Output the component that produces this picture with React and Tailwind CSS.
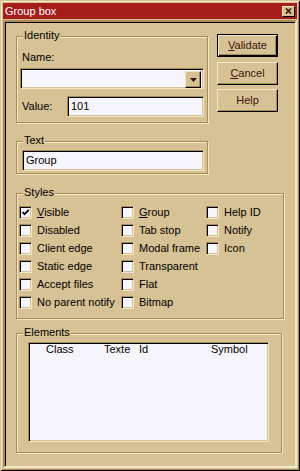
const sunken =
  "border border-t-[#a88c54] border-l-[#a88c54] border-r-[#f4e7c6] border-b-[#f4e7c6] shadow-[inset_1px_1px_0_#000,inset_-1px_-1px_0_#d6c294] bg-[#f6f5fb]";

function Group({ label, className, children }) {
  return (
    <div
      className={
        "relative border border-[#a88c54] shadow-[inset_1px_1px_0_#f4e7c6,1px_1px_0_#f4e7c6] " +
        className
      }
    >
      <span className="absolute -top-[8px] left-[6px] bg-[#d6c294] px-[1px] leading-[13px]">
        {label}
      </span>
      {children}
    </div>
  );
}

function Button({ children, primary }) {
  const cls = primary
    ? "border border-black shadow-[inset_1px_1px_0_#f4e7c6,inset_-1px_-1px_0_#000,inset_-2px_-2px_0_#a88c54]"
    : "border border-t-[#f4e7c6] border-l-[#f4e7c6] border-r-black border-b-black shadow-[inset_-1px_-1px_0_#a88c54]";
  return (
    <div
      className={
        "w-[61px] h-[23px] flex items-center justify-center text-[#3c160c] leading-[13px] " + cls
      }
    >
      {children}
    </div>
  );
}

function Check({ checked, children }) {
  return (
    <div className="flex items-center h-[13px] gap-[5px]">
      <span className={"w-[13px] h-[13px] shrink-0 flex items-center justify-center " + sunken}>
        {checked && (
          <svg width="9" height="9" viewBox="0 0 9 9">
            <path d="M1.5 4 L3.5 6.2 L7.8 1.8" fill="none" stroke="#000" strokeWidth="1.8" />
          </svg>
        )}
      </span>
      <span className="leading-[13px] whitespace-nowrap">{children}</span>
    </div>
  );
}

export default function App() {
  return (
    <div
      className="w-[300px] h-[471px] p-[3px] bg-[#d6c294] text-black text-[11px] shadow-[inset_1px_1px_0_#d6c294,inset_-1px_-1px_0_#000,inset_2px_2px_0_#f4e7c6,inset_-2px_-2px_0_#a88c54]"
      style={{ fontFamily: '"Liberation Sans", Arial, sans-serif' }}
    >
      {/* Title bar */}
      <div className="h-[16px] bg-[#a61e1c] flex items-center pl-[2px] pr-[2px]">
        <span className="text-white text-[11px] leading-[13px]">Group box</span>
        <div className="ml-auto w-[13px] h-[11px] bg-[#d6c294] border border-t-[#f4e7c6] border-l-[#f4e7c6] border-r-black border-b-black flex items-center justify-center">
          <svg width="7" height="6" viewBox="0 0 7 6">
            <path d="M1 0.5 L6 5.5 M6 0.5 L1 5.5" stroke="#3c160c" strokeWidth="1.6" />
          </svg>
        </div>
      </div>

      {/* Client area */}
      <div className="mt-[1px] w-[294px] h-[448px] border-2 border-t-[#a88c54] border-l-[#a88c54] border-r-[#f4e7c6] border-b-[#f4e7c6] shadow-[inset_1px_1px_0_#000]">
        <div className="flex">
          <div className="ml-[11px] mt-[14px] w-[192px]">
            <Group label="Identity" className="h-[87px] px-[3px] pt-[14px]">
              <div className="pl-[2px] leading-[13px]">Name:</div>
              <div className={"mt-[4px] h-[21px] flex justify-end p-[2px] " + sunken}>
                <div className="w-[16px] h-[17px] bg-[#d6c294] border border-t-[#f4e7c6] border-l-[#f4e7c6] border-r-black border-b-black shadow-[inset_-1px_-1px_0_#a88c54] flex items-center justify-center">
                  <svg width="7" height="4" viewBox="0 0 7 4">
                    <path d="M0 0 H7 L3.5 4 Z" fill="#3c160c" />
                  </svg>
                </div>
              </div>
              <div className="mt-[7px] flex items-center">
                <span className="pl-[2px] leading-[13px]">Value:</span>
                <div className={"ml-auto w-[137px] h-[21px] flex items-center pl-[3px] " + sunken}>
                  101
                </div>
              </div>
            </Group>
            <Group label="Text" className="mt-[18px] h-[33px] pt-[8px] pl-[5px] pr-[3px]">
              <div className={"h-[21px] flex items-center pl-[3px] " + sunken}>Group</div>
            </Group>
          </div>

          <div className="ml-[9px] mt-[12px] flex flex-col">
            <Button primary>
              <span>
                <u>V</u>alidate
              </span>
            </Button>
            <div className="mt-[5px]">
              <Button>
                <span>
                  <u>C</u>ancel
                </span>
              </Button>
            </div>
            <div className="mt-[4px]">
              <Button>Help</Button>
            </div>
          </div>
        </div>

        <Group label="Styles" className="ml-[11px] mt-[19px] w-[268px] h-[126px] pt-[12px] pl-[2px]">
          <div className="grid grid-cols-[102px_85px_1fr]">
            <div className="flex flex-col gap-[5px]">
              <Check checked>
                <u>V</u>isible
              </Check>
              <Check>Disabled</Check>
              <Check>Client edge</Check>
              <Check>Static edge</Check>
              <Check>Accept files</Check>
              <Check>No parent notify</Check>
            </div>
            <div className="flex flex-col gap-[5px]">
              <Check>
                <u>G</u>roup
              </Check>
              <Check>Tab stop</Check>
              <Check>Modal frame</Check>
              <Check>Transparent</Check>
              <Check>Flat</Check>
              <Check>Bitmap</Check>
            </div>
            <div className="flex flex-col gap-[5px]">
              <Check>Help ID</Check>
              <Check>Notify</Check>
              <Check>Icon</Check>
            </div>
          </div>
        </Group>

        <Group label="Elements" className="ml-[11px] mt-[14px] w-[266px] h-[120px] pt-[8px] pl-[11px]">
          <div className={"w-[241px] h-[100px] " + sunken}>
            <div className="flex pl-[17px] leading-[13px]">
              <span className="w-[58px]">Class</span>
              <span className="w-[35px]">Texte</span>
              <span className="w-[72px]">Id</span>
              <span>Symbol</span>
            </div>
          </div>
        </Group>
      </div>
    </div>
  );
}
